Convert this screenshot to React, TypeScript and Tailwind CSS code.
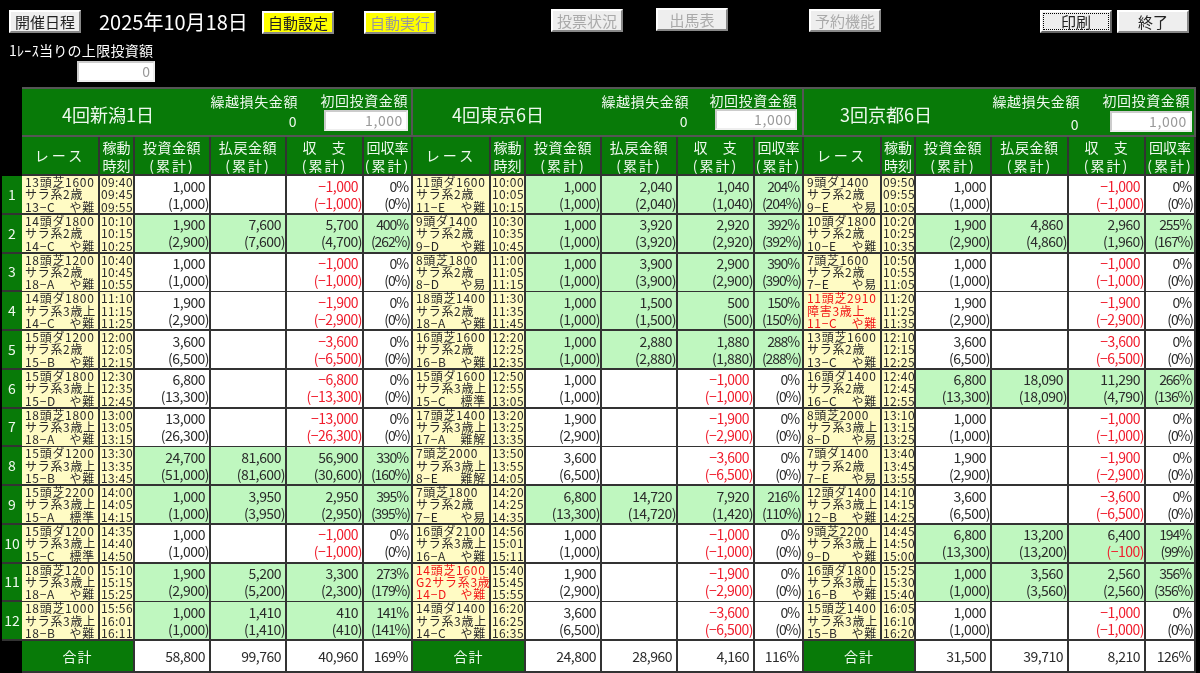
const FONT = "font-['Noto_Sans_CJK_JP','Noto_Sans',sans-serif]";

// 13頭芝1600|サラ系2歳|13−C|や難|times|inv|inv total|pay|pay total|net|net total|rate|rate total|red race
const niigata = [
  '13頭芝1600|サラ系2歳|13−C|や難|09:40|09:45|09:55|1,000|(1,000)|||−1,000|(−1,000)|0%|(0%)',
  '14頭ダ1800|サラ系2歳|14−C|や難|10:10|10:15|10:25|1,900|(2,900)|7,600|(7,600)|5,700|(4,700)|400%|(262%)',
  '18頭芝1200|サラ系2歳|18−A|や難|10:40|10:45|10:55|1,000|(1,000)|||−1,000|(−1,000)|0%|(0%)',
  '14頭ダ1800|サラ系3歳上|14−C|や難|11:10|11:15|11:25|1,900|(2,900)|||−1,900|(−2,900)|0%|(0%)',
  '15頭ダ1200|サラ系2歳|15−B|や難|12:00|12:05|12:15|3,600|(6,500)|||−3,600|(−6,500)|0%|(0%)',
  '15頭ダ1800|サラ系3歳上|15−D|や難|12:30|12:35|12:45|6,800|(13,300)|||−6,800|(−13,300)|0%|(0%)',
  '18頭芝1800|サラ系3歳上|18−A|や難|13:00|13:05|13:15|13,000|(26,300)|||−13,000|(−26,300)|0%|(0%)',
  '15頭ダ1200|サラ系3歳上|15−B|や難|13:30|13:35|13:45|24,700|(51,000)|81,600|(81,600)|56,900|(30,600)|330%|(160%)',
  '15頭芝2200|サラ系3歳上|15−A|標準|14:00|14:05|14:15|1,000|(1,000)|3,950|(3,950)|2,950|(2,950)|395%|(395%)',
  '15頭ダ1200|サラ系3歳上|15−C|標準|14:35|14:40|14:50|1,000|(1,000)|||−1,000|(−1,000)|0%|(0%)',
  '18頭芝1200|サラ系3歳上|18−A|や難|15:10|15:15|15:25|1,900|(2,900)|5,200|(5,200)|3,300|(2,300)|273%|(179%)',
  '18頭芝1000|サラ系3歳上|18−B|や難|15:56|16:01|16:11|1,000|(1,000)|1,410|(1,410)|410|(410)|141%|(141%)',
];

const tokyo = [
  '11頭ダ1600|サラ系2歳|11−E|や難|10:00|10:05|10:15|1,000|(1,000)|2,040|(2,040)|1,040|(1,040)|204%|(204%)',
  '9頭ダ1400|サラ系2歳|9−D|や難|10:30|10:35|10:45|1,000|(1,000)|3,920|(3,920)|2,920|(2,920)|392%|(392%)',
  '8頭芝1800|サラ系2歳|8−D|や易|11:00|11:05|11:15|1,000|(1,000)|3,900|(3,900)|2,900|(2,900)|390%|(390%)',
  '18頭芝1400|サラ系2歳|18−A|や難|11:30|11:35|11:45|1,000|(1,000)|1,500|(1,500)|500|(500)|150%|(150%)',
  '16頭芝1600|サラ系2歳|16−B|や難|12:20|12:25|12:35|1,000|(1,000)|2,880|(2,880)|1,880|(1,880)|288%|(288%)',
  '15頭ダ1600|サラ系3歳上|15−C|標準|12:50|12:55|13:05|1,000|(1,000)|||−1,000|(−1,000)|0%|(0%)',
  '17頭芝1400|サラ系3歳上|17−A|難解|13:20|13:25|13:35|1,900|(2,900)|||−1,900|(−2,900)|0%|(0%)',
  '7頭芝2000|サラ系3歳上|8−E|難解|13:50|13:55|14:05|3,600|(6,500)|||−3,600|(−6,500)|0%|(0%)',
  '7頭芝1800|サラ系2歳|7−E|や易|14:20|14:25|14:35|6,800|(13,300)|14,720|(14,720)|7,920|(1,420)|216%|(110%)',
  '16頭ダ2100|サラ系3歳上|16−A|や難|14:56|15:01|15:11|1,000|(1,000)|||−1,000|(−1,000)|0%|(0%)',
  '14頭芝1600|G2サラ系3歳|14−D|や難|15:40|15:45|15:55|1,900|(2,900)|||−1,900|(−2,900)|0%|(0%)|red',
  '14頭ダ1400|サラ系3歳上|14−C|や難|16:20|16:25|16:35|3,600|(6,500)|||−3,600|(−6,500)|0%|(0%)',
];

const kyoto = [
  '9頭ダ1400|サラ系2歳|9−E|や易|09:50|09:55|10:05|1,000|(1,000)|||−1,000|(−1,000)|0%|(0%)',
  '10頭ダ1800|サラ系2歳|10−E|や難|10:20|10:25|10:35|1,900|(2,900)|4,860|(4,860)|2,960|(1,960)|255%|(167%)',
  '7頭芝1600|サラ系2歳|7−E|や易|10:50|10:55|11:05|1,000|(1,000)|||−1,000|(−1,000)|0%|(0%)',
  '11頭芝2910|障害3歳上|11−C|や難|11:20|11:25|11:35|1,900|(2,900)|||−1,900|(−2,900)|0%|(0%)|red',
  '13頭芝1600|サラ系2歳|13−C|や難|12:10|12:15|12:25|3,600|(6,500)|||−3,600|(−6,500)|0%|(0%)',
  '16頭ダ1400|サラ系2歳|16−C|や難|12:40|12:45|12:55|6,800|(13,300)|18,090|(18,090)|11,290|(4,790)|266%|(136%)',
  '8頭芝2000|サラ系3歳上|8−D|や易|13:10|13:15|13:25|1,000|(1,000)|||−1,000|(−1,000)|0%|(0%)',
  '7頭ダ1400|サラ系2歳|7−E|や易|13:40|13:45|13:55|1,900|(2,900)|||−1,900|(−2,900)|0%|(0%)',
  '12頭ダ1400|サラ系3歳上|12−B|や難|14:10|14:15|14:25|3,600|(6,500)|||−3,600|(−6,500)|0%|(0%)',
  '9頭芝2200|サラ系3歳上|9−D|や難|14:45|14:50|15:00|6,800|(13,300)|13,200|(13,200)|6,400|(−100)|194%|(99%)',
  '16頭ダ1800|サラ系3歳上|16−B|や難|15:25|15:30|15:40|1,000|(1,000)|3,560|(3,560)|2,560|(2,560)|356%|(356%)',
  '15頭芝1400|サラ系3歳上|15−B|や難|16:05|16:10|16:20|1,000|(1,000)|||−1,000|(−1,000)|0%|(0%)',
];

const GRID_A = 'grid grid-cols-[78px_35px_76px_76px_77px_49px]';
const GRID_B = 'grid grid-cols-[78px_34px_76px_77px_77px_50px]';
const LINE = 'border-r-2 border-b-2 border-[#333]';

const Button = ({ label, className }: { label: string; className: string }) => (
  <button
    className={`h-[23px] w-[72px] border-2 border-t-white border-l-white border-r-[#888] border-b-[#888] text-[15px] leading-none ${className}`}
  >
    {label}
  </button>
);

const Amount = ({ top, bottom, red }: { top: string; bottom: string; red?: boolean }) => {
  const color = red ? 'text-[#f01c2c]' : 'text-[#2b2b2b]';
  // the (−100) figure stays red while the amount above it is positive
  const bottomColor = bottom.startsWith('(−') ? 'text-[#f01c2c]' : 'text-[#2b2b2b]';
  return (
    <div className="flex flex-col items-end justify-center h-full text-[14px] leading-[17px] tracking-[-0.5px]">
      <span className={`${color} pr-[4px]`}>{top}</span>
      <span className={bottomColor}>{bottom}</span>
    </div>
  );
};

const Row = ({ text, cols }: { text: string; cols: string }) => {
  const [l1, l2, no, cond, t1, t2, t3, inv, invT, pay, payT, net, netT, rate, rateT, flag] = text.split('|');
  const hit = pay !== '';
  const bg = hit ? 'bg-[#bff7bf]' : 'bg-white';
  return (
    <div className={`${cols} h-[38.75px]`}>
      <div className={`${LINE} bg-[#fffbc4] pl-[3px] pr-[3px] text-[12px] tracking-[0.7px] leading-[12.4px] whitespace-nowrap ${flag ? 'text-[#f21818]' : 'text-[#2b2b2b]'}`}>
        <div>{l1}</div>
        <div>{l2}</div>
        <div className="flex justify-between">
          <span>{no}</span>
          <span>{cond}</span>
        </div>
      </div>
      <div className={`${LINE} bg-[#fffbc4] text-[#2b2b2b] pl-[1px] text-[12px] tracking-[0.4px] leading-[12.4px]`}>
        <div>{t1}</div>
        <div>{t2}</div>
        <div>{t3}</div>
      </div>
      <div className={`${LINE} ${bg}`}>
        <Amount top={inv} bottom={invT} />
      </div>
      <div className={`${LINE} ${bg}`}>
        <Amount top={pay} bottom={payT} />
      </div>
      <div className={`${LINE} ${bg}`}>
        <Amount top={net} bottom={netT} red={net.startsWith('−')} />
      </div>
      <div className={`${LINE} ${bg}`}>
        <div className="flex flex-col items-end justify-center h-full text-[14px] leading-[17px] tracking-[-1.1px] text-[#2b2b2b] pr-[1px]">
          <span className="pr-[2px]">{rate}</span>
          <span>{rateT}</span>
        </div>
      </div>
    </div>
  );
};

const HeadCell = ({ a, b, className = '' }: { a: string; b: string; className?: string }) => (
  <div className={`${LINE} flex flex-col items-center justify-center text-[14px] leading-[18px] tracking-[0.6px] ${className}`}>
    <span>{a}</span>
    <span className="tracking-[2px]">{b}</span>
  </div>
);

const Panel = ({
  title,
  rows,
  totals,
  cols,
  bannerPad,
  labelPad,
  inputClass,
  zeroTop,
}: {
  title: string;
  rows: string[];
  totals: string[];
  cols: string;
  bannerPad: string;
  labelPad: string;
  inputClass: string;
  zeroTop: string;
}) => (
  <section className="shrink-0">
    <div className="flex h-[50px] bg-[#087a08] border-t-2 border-b-2 border-r-2 border-[#555] text-[#eef8ee] whitespace-nowrap">
      <div className={`w-[188px] text-[18px] leading-[50px] ${bannerPad}`}>{title}</div>
      <div className="w-[88px] flex flex-col items-end pt-[2px] text-[14px] leading-[20px] tracking-[0.6px]">
        <span>繰越損失金額</span>
        <span className={`pr-[1px] ${zeroTop}`}>0</span>
      </div>
      <div className={`w-[113px] flex flex-col items-end pt-[1px] text-[14px] leading-[20px] tracking-[0.6px] ${labelPad}`}>
        <span>初回投資金額</span>
        <div className={`${inputClass} h-[21px] bg-white border-2 border-t-[#ccc] border-l-[#ccc] border-r-[#eee] border-b-[#eee] text-right pr-[3px] text-[#999] text-[14px] leading-[17px]`}>
          1,000
        </div>
      </div>
    </div>
    <div className={`${cols} h-[39px] bg-[#087a08] text-[#eef8ee]`}>
      <div className={`${LINE} flex items-center justify-center text-[14px] tracking-[3px]`}>レース</div>
      <div className={`${LINE} flex flex-col items-center justify-center text-[14px] leading-[18px]`}>
        <span>稼動</span>
        <span>時刻</span>
      </div>
      <HeadCell a="投資金額" b="(累計)" />
      <HeadCell a="払戻金額" b="(累計)" />
      <HeadCell a="収　支" b="(累計)" />
      <HeadCell a="回収率" b="(累計)" className="tracking-normal" />
    </div>
    {rows.map((row) => (
      <Row key={row} text={row} cols={cols} />
    ))}
    <div className={`${cols} h-[32px] text-[#2b2b2b] text-[14px] tracking-[-0.5px]`}>
      <div className={`${LINE} col-span-2 bg-[#087a08] text-[#eef8ee] flex items-center justify-center tracking-[1px]`}>合計</div>
      {totals.map((total, i) => (
        <div key={i} className={`${LINE} bg-white flex items-center justify-end ${i === 3 ? 'pr-[3px]' : 'pr-[4px]'}`}>
          {total}
        </div>
      ))}
    </div>
  </section>
);

export default function App() {
  return (
    <div className={`relative h-[673px] w-[1200px] overflow-hidden bg-black blur-[0.35px] ${FONT}`}>
      <header className="h-[87px] pl-[9px] text-white">
        <div className="flex items-start h-[42px]">
          <Button label="開催日程" className="mt-[10px] bg-[#eee] text-[#222]" />
          <div className="mt-[9px] ml-[18px] w-[163px] text-[20px] leading-[26px]">2025年10月18日</div>
          <Button label="自動設定" className="mt-[11px] bg-[#ffff00] text-[#222]" />
          <Button label="自動実行" className="mt-[11px] ml-[30px] bg-[#ffff00] text-[#999]" />
          <Button label="投票状況" className="mt-[9px] ml-[115px] bg-[#eee] text-[#aaa]" />
          <Button label="出馬表" className="mt-[8px] ml-[33px] bg-[#eee] text-[#aaa]" />
          <Button label="予約機能" className="mt-[9px] ml-[81px] bg-[#eee] text-[#aaa]" />
          <button className="mt-[10px] ml-[159px] h-[23px] w-[72px] border-2 border-t-white border-l-white border-r-[#666] border-b-[#666] bg-[#eee] p-[1px] text-[15px] leading-none text-[#222]">
            <span className="flex h-full items-center justify-center border border-dotted border-black">印刷</span>
          </button>
          <Button label="終了" className="mt-[10px] ml-[5px] bg-[#eee] text-[#222]" />
        </div>
        <div className="text-[14px] leading-[16px] tracking-[0.3px]">1ﾚｰｽ当りの上限投資額</div>
        <div className="mt-[3px] ml-[68px] h-[21px] w-[78px] bg-white border-2 border-t-[#ccc] border-l-[#ccc] border-r-[#eee] border-b-[#eee] text-right pr-[3px] text-[#999] text-[14px] leading-[17px]">
          0
        </div>
      </header>
      <main className="flex pl-[2px]">
        <div className="w-[20px] shrink-0 pt-[89px]">
          {niigata.map((_, i) => (
            <div key={i} className="flex h-[38.75px] items-center justify-center border-b-2 border-[#333] bg-[#087a08] text-[14px] text-[#eef8ee]">
              {i + 1}
            </div>
          ))}
        </div>
        <Panel
          title="4回新潟1日"
          rows={niigata}
          totals={['58,800', '99,760', '40,960', '169%']}
          cols={GRID_A}
          bannerPad="pl-[40px]"
          labelPad="pr-[3px]"
          inputClass="w-[84px] mt-[0px]"
          zeroTop="mt-[0px]"
        />
        <Panel
          title="4回東京6日"
          rows={tokyo}
          totals={['24,800', '28,960', '4,160', '116%']}
          cols={GRID_A}
          bannerPad="pl-[39px]"
          labelPad="pr-[5px]"
          inputClass="w-[82px] mt-[-1px]"
          zeroTop="mt-[0px]"
        />
        <Panel
          title="3回京都6日"
          rows={kyoto}
          totals={['31,500', '39,710', '8,210', '126%']}
          cols={GRID_B}
          bannerPad="pl-[36px]"
          labelPad="pr-[3px]"
          inputClass="w-[82px] mt-[1px] mr-[-2px]"
          zeroTop="mt-[3px]"
        />
      </main>
    </div>
  );
}
